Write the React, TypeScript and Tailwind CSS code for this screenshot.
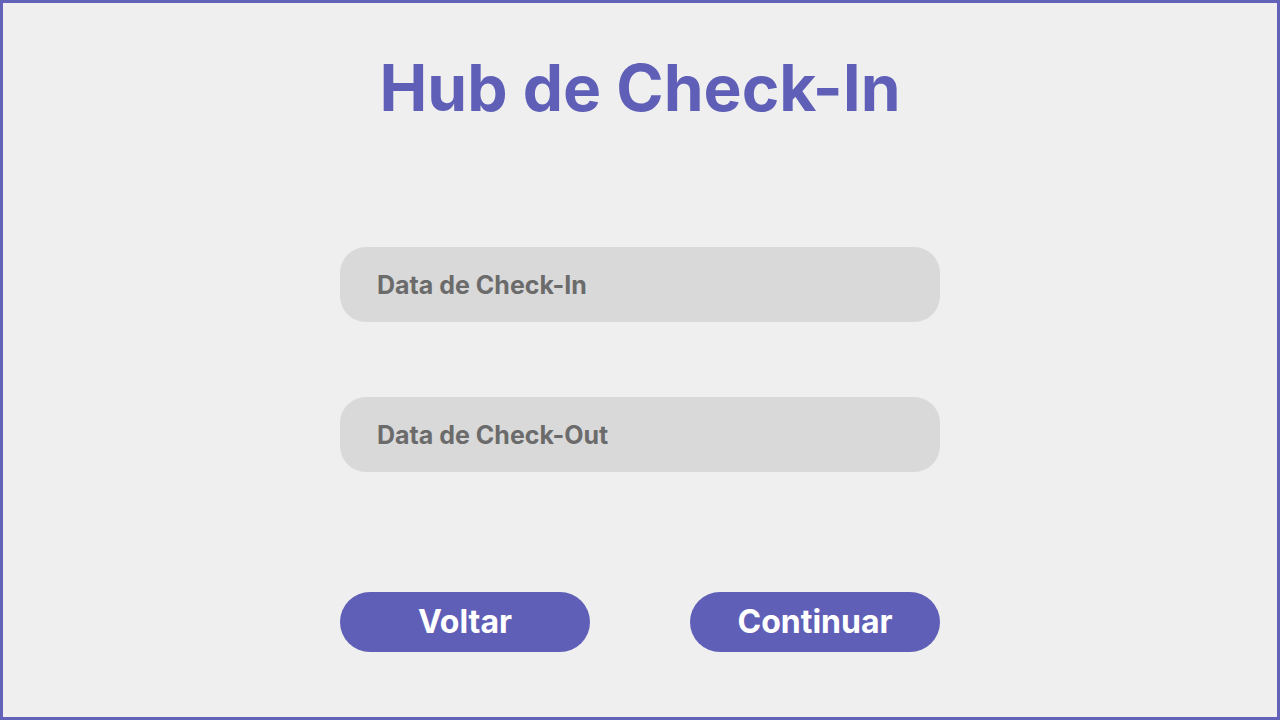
export default function App() {
  return (
    <div
      className="w-[1280px] h-[720px] bg-[#efefef] border-[3px] border-[#6262b8] flex flex-col items-center"
      style={{ fontFamily: "Inter, 'Noto Sans', sans-serif" }}
    >
      <h1 className="mt-[46px] text-[64px] leading-[77px] font-bold text-[#5f5fb8]">
        Hub de Check-In
      </h1>

      <div className="mt-[121px] flex flex-col gap-[75px]">
        <input
          type="text"
          placeholder="Data de Check-In"
          className="w-[600px] h-[75px] rounded-[26px] bg-[#d9d9d9] px-[37px] text-[25px] font-bold text-[#6b6b6b] placeholder:text-[#6b6b6b] outline-none"
        />
        <input
          type="text"
          placeholder="Data de Check-Out"
          className="w-[600px] h-[75px] rounded-[26px] bg-[#d9d9d9] px-[37px] text-[25px] font-bold text-[#6b6b6b] placeholder:text-[#6b6b6b] outline-none"
        />
      </div>

      <div className="mt-[120px] flex gap-[100px]">
        <button
          type="button"
          className="w-[250px] h-[60px] rounded-full bg-[#5f5fb8] text-white text-[32px] font-bold"
        >
          Voltar
        </button>
        <button
          type="button"
          className="w-[250px] h-[60px] rounded-full bg-[#5f5fb8] text-white text-[32px] font-bold"
        >
          Continuar
        </button>
      </div>
    </div>
  );
}
